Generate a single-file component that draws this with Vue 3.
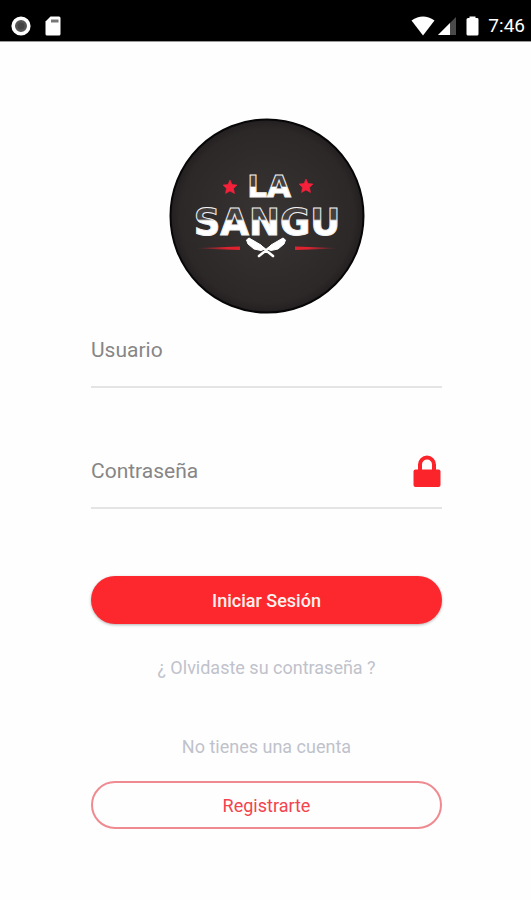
<script setup>
import { ref } from 'vue'

const user = ref('')
const password = ref('')
const visible = ref(false)
</script>

<template>
  <div class="screen">
    <header class="status">
      <div class="group left">
        <svg class="disc" viewBox="0 0 20 20" aria-hidden="true">
          <circle cx="10" cy="10" r="7.8" fill="#555" stroke="#fff" stroke-width="3.6" />
          <circle cx="10" cy="10" r="3.5" fill="#444" />
        </svg>
        <svg class="card" viewBox="0 0 16 20" aria-hidden="true">
          <path d="M5.5 0.5H14Q15.500 0.500 15.500 2V18Q15.500 19.500 14 19.500H2Q0.500 19.500 0.500 18V5.500Z" fill="#fff" />
          <path d="M6 3.500H13.500V6.500H6Z" fill="#777" />
        </svg>
      </div>
      <div class="group right">
        <svg class="wifi" viewBox="0 0 24 20" aria-hidden="true">
          <path d="M0.500 4.500Q12-3.500 23.500 4.500L12 19.500Z" fill="#fff" />
        </svg>
        <svg class="signal" viewBox="0 0 18 18" aria-hidden="true">
          <path d="M0 18L18 0V18Z" fill="#4a4a4a" />
          <path d="M0 18L12 6V18Z" fill="#fff" />
        </svg>
        <svg class="battery" viewBox="0 0 13 20" aria-hidden="true">
          <path d="M3.500 0.500H9.500V2H11.500Q12.500 2 12.500 3.500V18Q12.500 19.500 11 19.500H2Q0.500 19.500 0.500 18V3.500Q0.500 2 2 2H3.500Z" fill="#fff" />
        </svg>
        <time class="clock">7:46</time>
      </div>
    </header>

    <main class="content">
      <svg class="logo" viewBox="0 0 196 196" role="img" aria-label="La Sangu">
        <defs>
          <radialGradient id="plate">
            <stop offset="0" stop-color="#393434" />
            <stop offset="0.9" stop-color="#2c2828" />
            <stop offset="1" stop-color="#231f20" />
          </radialGradient>
          <linearGradient id="ink-top" gradientUnits="userSpaceOnUse" x1="0" y1="56" x2="0" y2="80">
            <stop offset="0.5" stop-color="#454040" />
            <stop offset="0.56" stop-color="#fff" />
          </linearGradient>
          <linearGradient id="ink-bottom" gradientUnits="userSpaceOnUse" x1="0" y1="88" x2="0" y2="117">
            <stop offset="0.45" stop-color="#454040" />
            <stop offset="0.51" stop-color="#fff" />
          </linearGradient>
          <linearGradient id="fade-left">
            <stop offset="0" stop-color="#e0222e" stop-opacity="0" />
            <stop offset="0.7" stop-color="#e0222e" />
          </linearGradient>
          <linearGradient id="fade-right">
            <stop offset="0.3" stop-color="#e0222e" />
            <stop offset="1" stop-color="#e0222e" stop-opacity="0" />
          </linearGradient>
        </defs>
        <circle cx="98" cy="98" r="96.500" fill="url(#plate)" stroke="#080707" stroke-width="2" />
        <text class="word top" x="100" y="79" fill="url(#ink-top)">LA</text>
        <text class="word bottom" x="98" y="117" fill="url(#ink-bottom)">SANGU</text>
        <path id="star" d="M61 62L63 66.500L68 67L64.500 70.500L65.500 75.500L61 73L56.500 75.500L57.500 70.500L54 67L59 66.500Z" fill="#f5203a" stroke="#f5203a" stroke-width="0.6" />
        <use href="#star" x="76" y="-1" />
        <path d="M28 130L71 128.500V132L28 130.500Z" fill="url(#fade-left)" />
        <path d="M126 128.500L168 130V130.500L126 132Z" fill="url(#fade-right)" />
        <g fill="#fff" stroke="#fff" stroke-linejoin="round">
          <path d="M80 120L92 127L96 131L92 132.500L85 131L79 126L77.500 122Z" />
          <path d="M114 120L102 127L98 131L102 132.500L109 131L115 126L116.500 122Z" />
          <path d="M94 130L104 138M100 130L90 138" stroke-width="2.600" stroke-linecap="round" />
        </g>
      </svg>

      <form class="form" @submit.prevent>
        <div class="field">
          <input v-model="user" type="text" placeholder="Usuario" aria-label="Usuario" autocomplete="username" />
        </div>
        <div class="field">
          <input v-model="password" :type="visible ? 'text' : 'password'" placeholder="Contraseña" aria-label="Contraseña" autocomplete="current-password" />
          <button class="lock" type="button" aria-label="Mostrar contraseña" @click="visible = !visible">
            <svg viewBox="0 0 28 32" aria-hidden="true">
              <path d="M7 16V9.500A7 7 0 0 1 21 9.500V16" fill="none" stroke="#fc242b" stroke-width="4" />
              <rect x="0.500" y="14.500" width="27" height="17.500" rx="2" fill="#fc242b" />
            </svg>
          </button>
        </div>
        <button class="pill primary" type="submit">Iniciar Sesión</button>
      </form>

      <a class="link" href="#recuperar">¿ Olvidaste su contraseña ?</a>
      <p class="hint">No tienes una cuenta</p>
      <button class="pill outline" type="button">Registrarte</button>
    </main>
  </div>
</template>

<style>
body {
  margin: 0;
  background: #fefefe;
}
</style>

<style scoped>
.screen {
  min-height: 100vh;
  background: #fefefe;
  font-family: Roboto, "Liberation Sans", sans-serif;
}

.status {
  display: flex;
  justify-content: space-between;
  align-items: center;
  box-sizing: border-box;
  height: 42px;
  padding: 10px 6px 0 11px;
  background: #000;
  border-bottom: 1px solid #999;
  color: #fff;
}

.group {
  display: flex;
  align-items: center;
}

.left {
  gap: 14px;
}

.disc {
  width: 20px;
  height: 20px;
}

.card {
  width: 16px;
  height: 20px;
}

.wifi {
  width: 24px;
  height: 20px;
  margin-right: 3px;
}

.signal {
  width: 18px;
  height: 18px;
  margin-right: 10px;
}

.battery {
  width: 13px;
  height: 20px;
  margin-right: 9px;
}

.clock {
  font-size: 19px;
  line-height: 20px;
}

.content {
  display: flex;
  flex-direction: column;
  align-items: center;
  padding: 76px 89px 40px 91px;
}

.logo {
  width: 196px;
  height: 196px;
}

.word {
  font-family: "DejaVu Sans", sans-serif;
  font-weight: 700;
  text-anchor: middle;
  stroke: #f4f2f2;
  stroke-width: 1px;
}

.top {
  font-size: 31px;
}

.bottom {
  font-size: 37px;
}

.form {
  display: flex;
  flex-direction: column;
  align-self: stretch;
}

.field {
  display: flex;
  align-items: center;
  height: 72px;
  margin-bottom: 47px;
  border-bottom: 2px solid #e4e4e4;
}

.field input {
  flex: 1;
  min-width: 0;
  padding: 0;
  border: 0;
  outline: 0;
  background: transparent;
  color: #444;
  font: inherit;
  font-size: 21px;
  line-height: 28px;
}

.field input::placeholder {
  color: #868686;
  opacity: 1;
}

.lock {
  display: flex;
  padding: 0 1px;
  border: 0;
  background: none;
  cursor: pointer;
}

.lock svg {
  width: 28px;
  height: 32px;
}

.pill {
  align-self: stretch;
  box-sizing: border-box;
  height: 48px;
  border-radius: 24px;
  font: inherit;
  font-size: 18px;
  cursor: pointer;
}

.primary {
  margin-top: 20px;
  border: 0;
  background: #fd282d;
  color: #fff0ee;
  font-weight: 500;
  box-shadow: 0 1px 3px rgba(0, 0, 0, 0.3);
}

.outline {
  border: 2px solid #ef8a90;
  background: transparent;
  color: #f4444d;
}

.link,
.hint {
  color: #c0c2cb;
  font-size: 18px;
  line-height: 24px;
  text-decoration: none;
}

.link {
  margin-top: 32px;
}

.hint {
  margin: 55px 0 22px;
}
</style>
